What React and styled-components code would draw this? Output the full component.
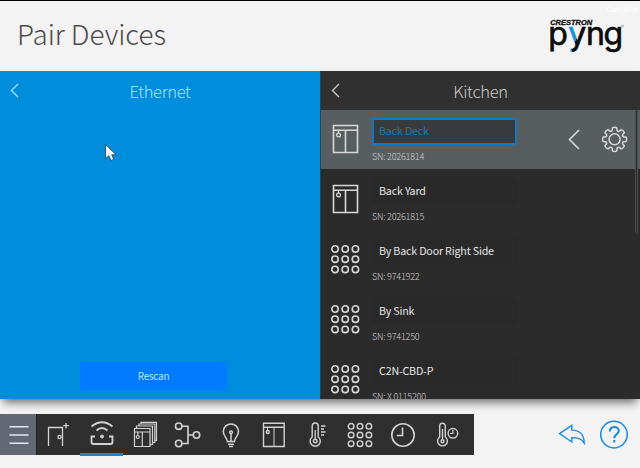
import React from "react";
import styled, { createGlobalStyle, css } from "styled-components";

const GlobalStyle = createGlobalStyle`
  * { box-sizing: border-box; }
  body {
    margin: 0;
    overflow: hidden;
    background: #f3f3f3;
    font-family: "Noto Sans CJK SC", "Noto Sans", sans-serif;
  }
  svg { display: block; flex: none; overflow: visible; }
  button { font: inherit; border: 0; padding: 0; background: none; }
`;

const Screen = styled.div`
  position: relative;
  display: flex;
  flex-direction: column;
  width: 640px;
  height: 468px;
  overflow: hidden;
  background: #f3f3f3;
`;

const Header = styled.header`
  display: flex;
  justify-content: space-between;
  flex: none;
  height: 71px;
  border-top: 1px solid #000;
  padding: 15px 15px 0 17px;
`;

const Title = styled.h1`
  margin: 0;
  font-size: 27.8px;
  font-weight: 300;
  line-height: 35px;
  letter-spacing: -0.05px;
  color: #4c4c4e;
`;

const Status = styled.div`
  position: absolute;
  top: 5px;
  right: 1px;
  font-size: 7.2px;
  line-height: 9px;
  color: #fff;
`;

const Panels = styled.main`
  display: grid;
  grid-template-columns: 320px 320px;
  flex: none;
  height: 328px;
  box-shadow: 0 6px 9px -3px rgba(0, 0, 0, 0.6);
`;

const Panel = styled.section`
  display: flex;
  flex-direction: column;
  min-height: 0;
  overflow: hidden;
  background: ${(p) => (p.$tone === "blue" ? "#008edc" : "#2b2b2b")};
  border-left: ${(p) => (p.$tone === "blue" ? "0" : "1px solid #0b4b6e")};
`;

const PanelHead = styled.div`
  display: grid;
  grid-template-columns: 30px 1fr 30px;
  flex: none;
  align-items: center;
  height: 39px;
  background: ${(p) => (p.$tone === "blue" ? "transparent" : "#303030")};
  color: ${(p) => (p.$tone === "blue" ? "#a4e2fa" : "#c9c9c9")};
`;

const BackSlot = styled.div`
  padding-left: 10px;
`;

const PanelTitle = styled.h2`
  margin: 0;
  font-size: 16.6px;
  font-weight: 300;
  line-height: 24px;
  letter-spacing: -0.35px;
  text-align: center;
`;

const PanelBody = styled.div`
  display: flex;
  flex: 1;
  flex-direction: column;
  align-items: flex-start;
  justify-content: flex-end;
  padding: 0 0 9px 80px;
`;

const RescanButton = styled.button`
  width: 147px;
  height: 28px;
  border-radius: 2px;
  background: #007bff;
  color: #b9e6ff;
  font-size: 9.9px;
  letter-spacing: -0.2px;
  line-height: 28px;
`;

const DeviceList = styled.div`
  position: relative;
  flex: 1;
  min-height: 0;
  overflow: hidden;
`;

const DeviceRow = styled.div`
  display: grid;
  grid-template-columns: 51px 145px 1fr;
  height: 60px;
  border-bottom: 1px solid #2b2b2b;
  background: ${(p) => (p.$selected ? "#585d5f" : "#2b2b2b")};
  color: #d8d8d8;
`;

const DeviceIcon = styled.div`
  padding: 14px 0 0 10px;
`;

const DeviceInfo = styled.div`
  padding-top: 8px;
`;

const DeviceName = styled.div`
  height: 27px;
  padding-left: ${(p) => (p.$selected ? "5px" : "7px")};
  font-size: 10.7px;
  letter-spacing: -0.18px;
  font-weight: 400;
  line-height: ${(p) => (p.$selected ? "21px" : "25px")};
  color: #e5e5e5;
  white-space: nowrap;
  background: #292929;
  ${(p) =>
    p.$selected &&
    css`
      border: 2px solid #1777b8;
      background: #383b3d;
      color: #087fb5;
    `}
`;

const Serial = styled.div`
  margin-top: 4px;
  font-size: 9.1px;
  letter-spacing: -0.24px;
  font-weight: 300;
  line-height: 14px;
  color: #d0d0d0;
`;

const RowActions = styled.div`
  display: flex;
  gap: 21px;
  padding: 15px 0 0 50.5px;
`;

const BackArrow = styled.div`
  padding-top: 4px;
`;

const ScrollTrack = styled.div`
  position: absolute;
  top: 0;
  right: 2px;
  width: 3px;
  height: 124px;
  border: 1px solid #4b4d4e;
  border-radius: 2px;
  background: #292b2c;
`;

const Footer = styled.footer`
  display: flex;
  align-items: flex-start;
  justify-content: space-between;
  padding: 15px 11px 0 0;
`;

const Toolbar = styled.nav`
  display: flex;
  width: 473.5px;
  height: 41px;
  background: #2f2f2f;
`;

const MenuButton = styled.button`
  display: grid;
  place-items: center;
  flex: none;
  width: 37px;
  height: 41px;
  padding-left: 2px;
  border-right: 1px solid #202020;
  background: #626975;
  color: #e5e8ee;
`;

const ToolButton = styled.button`
  display: grid;
  place-items: center;
  flex: none;
  width: 43.1px;
  height: ${(p) => (p.$active ? "42px" : "41px")};
  color: #d2d2d2;
  border-bottom: ${(p) => (p.$active ? "3px solid #1d87d3" : "0")};
  padding-top: ${(p) => (p.$active ? "2px" : "0")};
`;

const FooterActions = styled.div`
  display: flex;
  gap: 13px;
  padding-top: 6px;
  color: #198ae4;
`;

const Pointer = styled.div`
  position: absolute;
  left: 104px;
  top: 143px;
`;

function Icon({ size = 30, width = 1.4, children }) {
  return (
    <svg width={size} height={size} viewBox={`0 0 ${size} ${size}`} fill="none" stroke="currentColor" strokeWidth={width}>
      {children}
    </svg>
  );
}

function Chevron({ w = 8, h = 15, stroke = 1.4 }) {
  return (
    <svg width={w + 2} height={h + 2} fill="none" stroke="currentColor" strokeWidth={stroke}>
      <path d={`M${w + 1} 1 L1.5 ${h / 2 + 1} L${w + 1} ${h + 1}`} />
    </svg>
  );
}

function ShadeIcon() {
  return (
    <Icon size={30} width={1.6}>
      <path d="M2.5 1.5h24v27h-24z M2.5 6.3h24 M14.5 6.3v22" />
      <path d="M7.5 6.3v2.7" strokeWidth="1.3" />
      <circle cx="7.5" cy="11" r="1.9" strokeWidth="1.4" />
    </Icon>
  );
}

function KeypadIcon() {
  const steps = [4, 14.2, 24.4];
  return (
    <Icon size={30} width={1.6}>
      {steps.map((y) => steps.map((x) => <circle key={`${x}-${y}`} cx={x} cy={y + 1} r="3.2" />))}
    </Icon>
  );
}

function gearPath(cx, cy) {
  const teeth = 8;
  const step = (Math.PI * 2) / teeth;
  const at = (r, a) => `${(cx + r * Math.sin(a)).toFixed(2)} ${(cy - r * Math.cos(a)).toFixed(2)}`;
  let d = "";
  for (let i = 0; i < teeth; i += 1) {
    const a = i * step;
    d += `${i ? "L" : "M"}${at(9.4, a - 0.25)} L${at(11.7, a - 0.19)} Q${at(12.8, a)} ${at(11.7, a + 0.19)} L${at(9.4, a + 0.25)} Q${at(8, a + step / 2)} ${at(9.4, a + step - 0.25)}`;
  }
  return `${d}Z`;
}

function GearIcon() {
  return (
    <Icon size={28} width={1.5}>
      <path d={gearPath(13.6, 14.3)} strokeLinejoin="round" />
      <circle cx="13.6" cy="14.3" r="5.5" />
    </Icon>
  );
}

const tools = {
  door: (
    <Icon width={1.3}>
      <path d="M4.5 26V7.5h14V26" />
      <circle cx="15.5" cy="17" r="1.6" />
      <path d="M22 3v5.5M19.3 5.7h5.5" />
    </Icon>
  ),
  pair: (
    <Icon width={1.8}>
      <path d="M4.5 6.5Q15 -2 25.5 6.5M9.5 10.5Q15 5.5 20.5 10.5" />
      <path d="M8 16.5H4.5v5.5q0 2 2 2h17q2 0 2-2v-5.5H22" />
      <circle cx="15" cy="16.5" r="1.5" fill="currentColor" strokeWidth="1" />
    </Icon>
  ),
  shadeGroup: (
    <Icon width={1.2}>
      <path d="M4.5 8.5h15.5v18h-15.5zM4.5 12h15.5M12.3 12v14.5" />
      <path d="M6.5 8V6h16v18.5H20M9 6V4h15.8v18.5H22.5M11 4V2.3h15.5v18H25" />
      <circle cx="7.8" cy="17" r="1.5" />
      <path d="M7.8 12v3.5" />
    </Icon>
  ),
  nodes: (
    <Icon width={1.6}>
      <circle cx="5.7" cy="6.2" r="3.2" />
      <circle cx="5.7" cy="23.5" r="3.2" />
      <circle cx="23.5" cy="15" r="3.2" />
      <path d="M9 6.2h6v17.3H9M15 15h5.2" />
    </Icon>
  ),
  bulb: (
    <Icon width={1.5}>
      <path d="M11.3 21.5c0-4-4-5-4-10a7.6 7.6 0 0 1 15.2 0c0 5-4 6-4 10z" />
      <path d="M15 13.7v7.8M12 24.3h6M13 26.4h4" />
      <circle cx="15" cy="12.3" r="1.4" />
    </Icon>
  ),
  shade: (
    <Icon width={1.4}>
      <path d="M4.5 3.3h20.7v23.2H4.5zM4.5 7.2h20.7" />
      <path d="M15 7.2v19.3M8.5 7.2v3" strokeWidth="1" />
      <circle cx="8.8" cy="12" r="1.5" />
    </Icon>
  ),
  thermometer: (
    <Icon width={1.4}>
      <path d="M10.2 17V6a3 3 0 0 1 6 0v11a5.1 5.1 0 1 1-6 0z" />
      <path d="M13.2 10v9M19 6h4.5M19 9h3M19 12h4.5M19 15h3" strokeWidth="1.3" />
      <circle cx="13.2" cy="21" r="1.8" />
    </Icon>
  ),
  keypad: (
    <Icon width={1.4}>
      {[6.3, 15, 23.7].map((y) => [6.1, 15, 23.9].map((x) => <circle key={`${x}-${y}`} cx={x} cy={y} r="2.8" />))}
    </Icon>
  ),
  clock: (
    <Icon width={1.6}>
      <circle cx="15" cy="15" r="11.2" />
      <path d="M14.5 7.5v8H8.7" />
    </Icon>
  ),
  climateTimer: (
    <Icon width={1.4}>
      <path d="M8.7 17V6a2.8 2.8 0 0 1 5.6 0v11a4.9 4.9 0 1 1-5.6 0z" />
      <path d="M11.5 9v10" />
      <circle cx="11.5" cy="21.3" r="1.5" />
      <circle cx="21.9" cy="13.3" r="4.8" />
      <path d="M21.9 10v3.5h-2.8" strokeWidth="1.2" />
    </Icon>
  ),
};

const devices = [
  { name: "Back Deck", serial: "20261814", kind: "shade", selected: true },
  { name: "Back Yard", serial: "20261815", kind: "shade" },
  { name: "By Back Door Right Side", serial: "9741922", kind: "keypad" },
  { name: "By Sink", serial: "9741250", kind: "keypad" },
  { name: "C2N-CBD-P", serial: "X 0115200", kind: "keypad" },
];

function Logo() {
  return (
    <svg width="77" height="40" viewBox="0 0 77 40">
      <defs>
        <linearGradient id="split" gradientUnits="userSpaceOnUse" x1="12.25" y1="12.75" x2="47.25" y2="25.75">
          <stop offset="0.5" stopColor="#1490dc" />
          <stop offset="0.5" stopColor="#0c0c0c" />
        </linearGradient>
      </defs>
      <text x="2.2" y="9" fontFamily="Liberation Sans, sans-serif" fontSize="6.6" fontWeight="700" fontStyle="italic" textLength="42" lengthAdjust="spacingAndGlyphs" stroke="#111" strokeWidth=".3" fill="#111">CRESTRON</text>
      <g fontFamily="Inter, sans-serif" fontSize="32" fontWeight="400" fill="#0c0c0c" stroke="#0c0c0c" strokeWidth="0.7">
        <text x="0.2" y="29">p</text>
        <text x="20.3" y="29" fill="url(#split)" stroke="url(#split)">y</text>
        <text x="38" y="29">n</text>
        <text x="55.6" y="29">g</text>
      </g>
      <circle cx="74.6" cy="10" r="0.9" fill="none" stroke="#777" strokeWidth="0.5" />
    </svg>
  );
}

export default function App() {
  return (
    <Screen>
      <GlobalStyle />
      <Header>
        <Title>Pair Devices</Title>
        <Logo />
      </Header>
      <Status>Cool Wise</Status>

      <Panels>
        <Panel $tone="blue">
          <PanelHead $tone="blue">
            <BackSlot><Chevron w={7} h={13} /></BackSlot>
            <PanelTitle>Ethernet</PanelTitle>
          </PanelHead>
          <PanelBody>
            <RescanButton>Rescan</RescanButton>
          </PanelBody>
        </Panel>

        <Panel $tone="dark">
          <PanelHead $tone="dark">
            <BackSlot><Chevron w={7} h={13} /></BackSlot>
            <PanelTitle>Kitchen</PanelTitle>
          </PanelHead>
          <DeviceList>
            {devices.map((d) => (
              <DeviceRow key={d.name} $selected={d.selected}>
                <DeviceIcon>{d.kind === "shade" ? <ShadeIcon /> : <KeypadIcon />}</DeviceIcon>
                <DeviceInfo>
                  <DeviceName $selected={d.selected}>{d.name}</DeviceName>
                  <Serial>SN: {d.serial}</Serial>
                </DeviceInfo>
                {d.selected && (
                  <RowActions>
                    <BackArrow><Chevron w={10} h={19} stroke={1.6} /></BackArrow>
                    <GearIcon />
                  </RowActions>
                )}
              </DeviceRow>
            ))}
            <ScrollTrack />
          </DeviceList>
        </Panel>
      </Panels>

      <Footer>
        <Toolbar>
          <MenuButton aria-label="Menu">
            <Icon size={22} width={1.6}>
              <path d="M1.5 2.8h19M1.5 11h19M1.5 19.2h19" />
            </Icon>
          </MenuButton>
          {Object.entries(tools).map(([name, icon]) => (
            <ToolButton key={name} aria-label={name} $active={name === "pair"}>
              {icon}
            </ToolButton>
          ))}
        </Toolbar>
        <FooterActions>
          <Icon size={30} width={1.4}>
            <path d="M3.5 13.6L15.8 5.3v4.8c8 0 12.4 4.9 12.4 12.9C25.2 18.6 22 17.6 15.8 17.6v4.4z" />
          </Icon>
          <Icon size={30} width={1.5}>
            <circle cx="15" cy="14.6" r="13.3" />
            <path d="M10.8 11.6c0-6 9-5.8 9-.8 0 3.6-4.5 3.4-4.5 7.4M15.3 20v2.4" strokeWidth="2.1" />
          </Icon>
        </FooterActions>
      </Footer>

      <Pointer>
        <svg width="14" height="18" fill="#fff" stroke="#24567a" strokeWidth="1">
          <path d="M1.5 1.5v14.2l3.3-3 2.3 4.8 2.7-1.2-2.1-4.5h4.5z" />
        </svg>
      </Pointer>
    </Screen>
  );
}
